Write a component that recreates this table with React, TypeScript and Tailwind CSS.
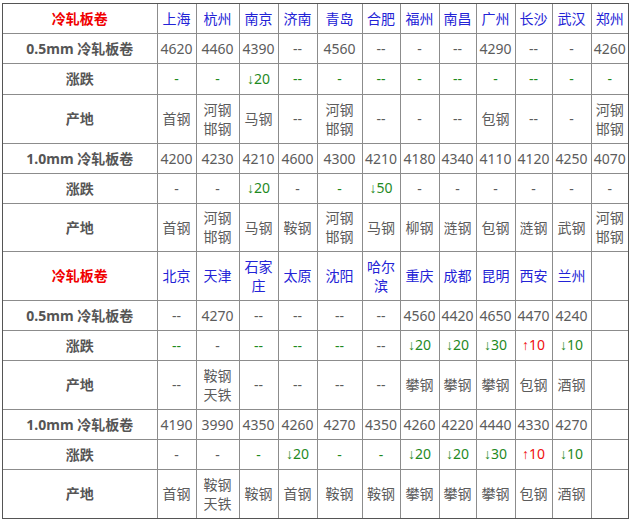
import React from 'react'

type Cell = string | { t: string; c?: 'g' | 'r' | 'n' }

const widths = [154, 39, 43, 39, 39, 45, 38, 39, 37, 39, 37, 39, 37]

interface Block {
  cities: string[]
  rows: { label: string; cells: Cell[]; h: string }[]
  headH: string
}

const g = (t: string): Cell => ({ t, c: 'g' })
const r = (t: string): Cell => ({ t, c: 'r' })

const blocks: Block[] = [
  {
    cities: ['上海', '杭州', '南京', '济南', '青岛', '合肥', '福州', '南昌', '广州', '长沙', '武汉', '郑州'],
    headH: 'h-[29px]',
    rows: [
      { label: '0.5mm 冷轧板卷', h: 'h-[30px]', cells: ['4620', '4460', '4390', '--', '4560', '--', '-', '--', '4290', '--', '-', '4260'] },
      { label: '涨跌', h: 'h-[31px]', cells: [g('-'), g('-'), g('↓20'), g('--'), g('-'), g('--'), g('-'), g('--'), g('-'), g('--'), g('-'), g('-')] },
      { label: '产地', h: 'h-[49px]', cells: ['首钢', '河钢\n邯钢', '马钢', '--', '河钢\n邯钢', '--', '-', '--', '包钢', '--', '-', '河钢\n邯钢'] },
      { label: '1.0mm 冷轧板卷', h: 'h-[30px]', cells: ['4200', '4230', '4210', '4600', '4300', '4210', '4180', '4340', '4110', '4120', '4250', '4070'] },
      { label: '涨跌', h: 'h-[30px]', cells: ['-', '-', g('↓20'), '-', g('-'), g('↓50'), '-', '-', '-', '-', '-', '-'] },
      { label: '产地', h: 'h-[48px]', cells: ['首钢', '河钢\n邯钢', '马钢', '鞍钢', '河钢\n邯钢', '马钢', '柳钢', '涟钢', '包钢', '涟钢', '武钢', '河钢\n邯钢'] },
    ],
  },
  {
    cities: ['北京', '天津', '石家庄', '太原', '沈阳', '哈尔滨', '重庆', '成都', '昆明', '西安', '兰州', ''],
    headH: 'h-[49px]',
    rows: [
      { label: '0.5mm 冷轧板卷', h: 'h-[30px]', cells: ['--', '4270', '--', '--', '--', '--', '4560', '4420', '4650', '4470', '4240', ''] },
      { label: '涨跌', h: 'h-[30px]', cells: [g('--'), '-', g('--'), g('--'), g('--'), '--', g('↓20'), g('↓20'), g('↓30'), r('↑10'), g('↓10'), ''] },
      { label: '产地', h: 'h-[49px]', cells: ['--', '鞍钢\n天铁', '--', '--', '--', '--', '攀钢', '攀钢', '攀钢', '包钢', '酒钢', ''] },
      { label: '1.0mm 冷轧板卷', h: 'h-[30px]', cells: ['4190', '3990', '4350', '4260', '4270', '4350', '4260', '4220', '4440', '4330', '4270', ''] },
      { label: '涨跌', h: 'h-[30px]', cells: ['-', '-', g('-'), g('↓20'), g('-'), g('-'), g('↓20'), g('↓20'), g('↓30'), r('↑10'), g('↓10'), ''] },
      { label: '产地', h: 'h-[49px]', cells: ['首钢', '鞍钢\n天铁', '鞍钢', '首钢', '鞍钢', '鞍钢', '攀钢', '攀钢', '攀钢', '包钢', '酒钢', ''] },
    ],
  },
]

const td = 'border border-[#8c8c8c] p-0 text-center align-middle leading-[19px]'

function Value({ cell }: { cell: Cell }) {
  const v = typeof cell === 'string' ? { t: cell, c: 'n' as const } : cell
  const color = v.c === 'g' ? 'text-[#1f8a1f]' : v.c === 'r' ? 'text-[#f01010]' : 'text-[#5c5c5c]'
  // arrows are narrow in the original, CJK font draws them full-width
  if (v.t.startsWith('↓') || v.t.startsWith('↑')) {
    return (
      <span className={color}>
        <span className="font-['Liberation_Sans',sans-serif] text-[14px]">{v.t[0]}</span>
        {v.t.slice(1)}
      </span>
    )
  }
  return (
    <span className={color}>
      {v.t.split('\n').map((line, i) => (
        <React.Fragment key={i}>
          {i > 0 && <br />}
          {line}
        </React.Fragment>
      ))}
    </span>
  )
}

export default function App() {
  return (
    <div className="bg-white w-[633px] h-[522px] pt-[3px] pl-[2px] font-['Noto_Sans','Noto_Sans_CJK_SC',sans-serif] text-[14px]">
      <div className="w-[627px] border border-[#555]">
        <table className="w-[625px] table-fixed border-collapse border-hidden">
          <colgroup>
            {widths.map((w, i) => (
              <col key={i} style={{ width: w }} />
            ))}
          </colgroup>
          <tbody>
            {blocks.map((b, bi) => (
              <React.Fragment key={bi}>
                <tr className={b.headH}>
                  <td className={`${td} font-bold text-[#f00000]`}>冷轧板卷</td>
                  {b.cities.map((c, i) => (
                    <td key={i} className={`${td} text-[#2323d6]`}>
                      {c}
                    </td>
                  ))}
                </tr>
                {b.rows.map((row, ri) => (
                  <tr key={ri} className={row.h}>
                    <td className={`${td} font-bold text-[#555]`}>{row.label}</td>
                    {row.cells.map((c, i) => (
                      <td key={i} className={`${td} whitespace-nowrap`}>
                        <Value cell={c} />
                      </td>
                    ))}
                  </tr>
                ))}
              </React.Fragment>
            ))}
          </tbody>
        </table>
      </div>
    </div>
  )
}
